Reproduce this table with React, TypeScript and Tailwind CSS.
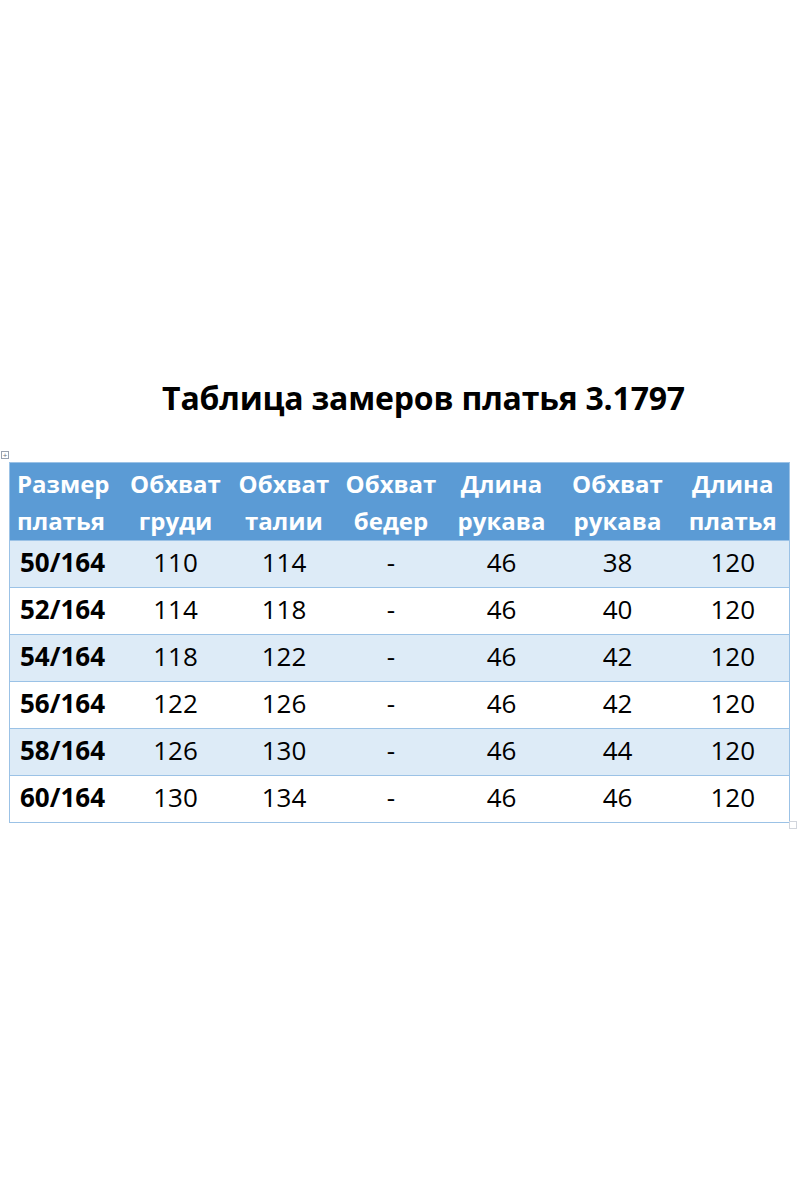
const headers = [
  ["Размер", "платья"],
  ["Обхват", "груди"],
  ["Обхват", "талии"],
  ["Обхват", "бедер"],
  ["Длина", "рукава"],
  ["Обхват", "рукава"],
  ["Длина", "платья"],
];

const rows = [
  ["50/164", "110", "114", "-", "46", "38", "120"],
  ["52/164", "114", "118", "-", "46", "40", "120"],
  ["54/164", "118", "122", "-", "46", "42", "120"],
  ["56/164", "122", "126", "-", "46", "42", "120"],
  ["58/164", "126", "130", "-", "46", "44", "120"],
  ["60/164", "130", "134", "-", "46", "46", "120"],
];

const widths = ["w-[111px]", "w-[110px]", "w-[107px]", "w-[107px]", "w-[114px]", "w-[118px]", "w-[113px]"];

export default function App() {
  return (
    <div className="relative h-[1200px] w-[800px] bg-white font-['Open_Sans',sans-serif] text-black">
      <div className="pt-[375px] text-center pl-[47px]">
        <h1 className="text-[32px] font-bold leading-[46px] tracking-[-0.2px]">
          Таблица замеров платья 3.1797
        </h1>
      </div>

      {/* table move handle */}
      <div className="absolute left-[1px] top-[451px] flex h-[8px] w-[8px] items-center justify-center border border-gray-400 text-[8px] leading-none text-gray-500">
        +
      </div>

      <div className="mt-[41px] ml-[9px] w-[781px]">
        <table className="table-fixed border-collapse border border-[#9bc2e6]">
          <colgroup>
            {widths.map((w, i) => (
              <col key={i} className={w} />
            ))}
          </colgroup>
          <thead>
            <tr className="h-[78px] bg-[#5b9bd5]">
              {headers.map((h, i) => (
                <th
                  key={i}
                  className={`p-0 text-[24px] font-bold leading-[37px] text-white ${i === 0 ? "pl-[7px] text-left" : "text-center"}`}
                >
                  {h[0]}
                  <br />
                  {h[1]}
                </th>
              ))}
            </tr>
          </thead>
          <tbody>
            {rows.map((r, ri) => (
              <tr
                key={ri}
                className={`h-[47px] border-t border-[#9bc2e6] ${ri % 2 === 0 ? "bg-[#ddebf7]" : "bg-white"}`}
              >
                {r.map((c, ci) => (
                  <td
                    key={ci}
                    className={`p-0 pb-[4px] text-[26px] leading-[30px] ${ci === 0 ? "pl-[10px] text-left font-bold" : "text-center"}`}
                  >
                    {c}
                  </td>
                ))}
              </tr>
            ))}
          </tbody>
        </table>
      </div>

      {/* table resize handle */}
      <div className="absolute left-[789px] top-[821px] h-[8px] w-[8px] border border-gray-300" />
    </div>
  );
}
